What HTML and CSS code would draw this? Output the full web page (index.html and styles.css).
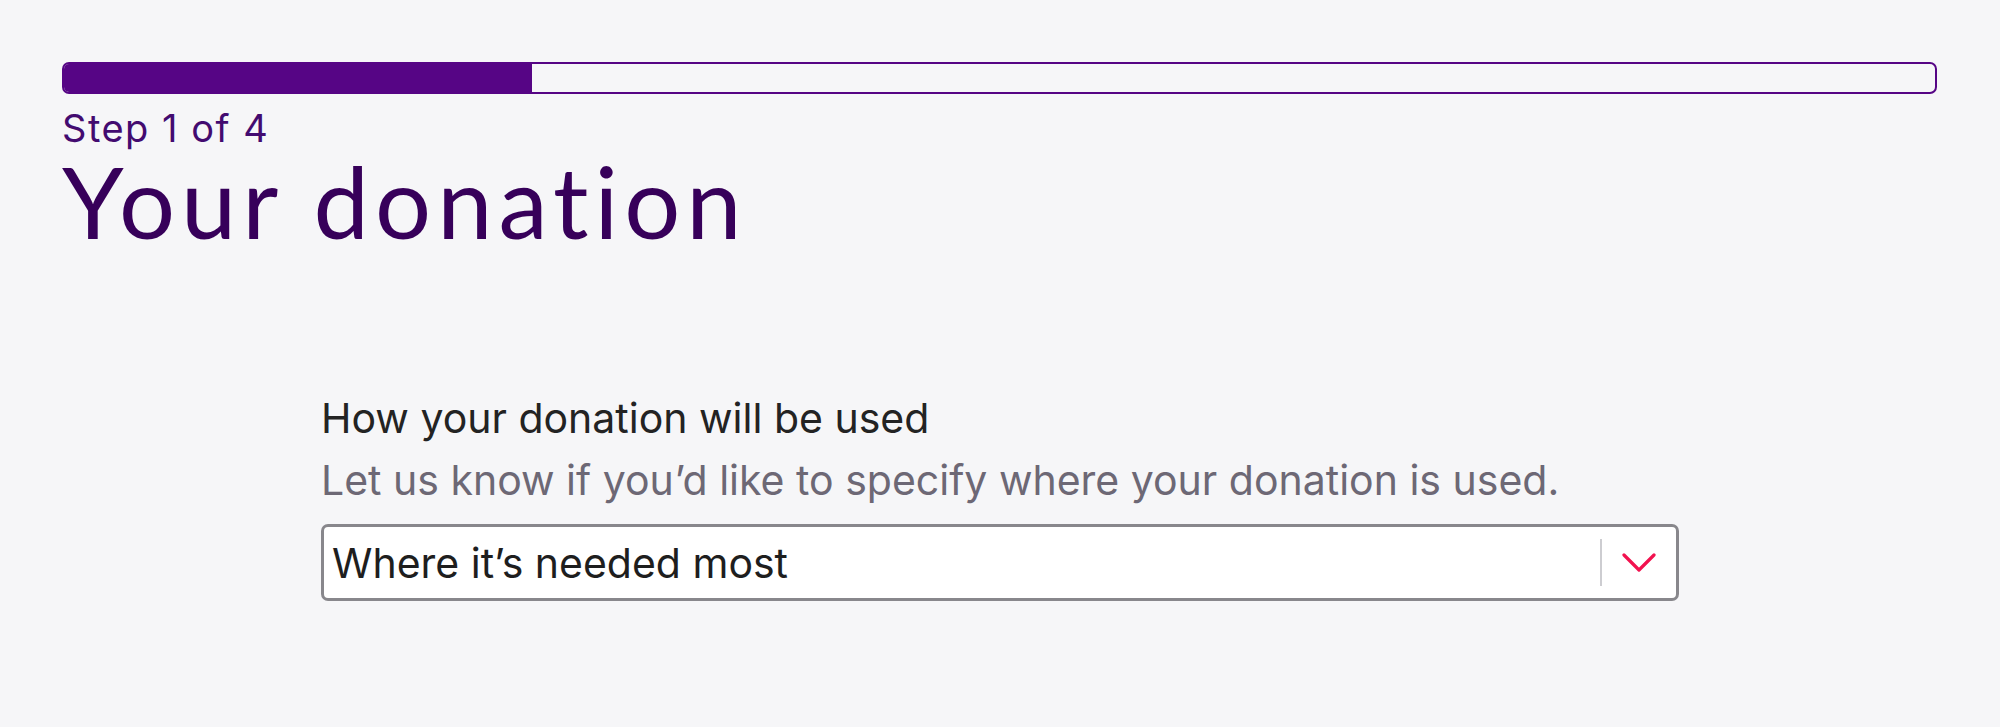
FILE: index.html
```html
<!DOCTYPE html>
<html lang="en">
<head>
<meta charset="utf-8">
<title>Your donation</title>
<link rel="stylesheet" href="styles.css">
</head>
<body>
<main class="page">
  <div class="progress" role="progressbar" aria-valuemin="0" aria-valuemax="4" aria-valuenow="1">
    <div class="progress-fill" style="width:25%"></div>
  </div>
  <p class="step">Step 1 of 4</p>
  <h1 class="title">Your donation</h1>
  <section class="field">
    <label class="field-label" for="use">How your donation will be used</label>
    <p class="field-hint">Let us know if you’d like to specify where your donation is used.</p>
    <div class="select" id="use" role="combobox" aria-expanded="false" tabindex="0">
      <span class="select-value">Where it’s needed most</span>
      <span class="select-sep"></span>
      <span class="select-icon">
        <svg width="34" height="20" viewBox="0 0 34 20" aria-hidden="true">
          <path d="M2 2 L17 17 L32 2" fill="none" stroke="#f2124f" stroke-width="3.2" stroke-linecap="round" stroke-linejoin="round"/>
        </svg>
      </span>
    </div>
  </section>
</main>
</body>
</html>
```
FILE: styles.css
```css
html, body {
  margin: 0;
  padding: 0;
  background: #f6f6f8;
}
body {
  font-family: Inter, "Noto Sans", "Liberation Sans", sans-serif;
}
.page {
  padding: 62px 63px 40px 62px;
}
.progress {
  height: 28px;
  border: 2px solid #560585;
  border-radius: 7px;
  background: #f6f6f8;
  overflow: hidden;
}
.progress-fill {
  height: 100%;
  background: #560585;
}
.step {
  margin: 12px 0 0 0;
  font-size: 38px;
  letter-spacing: 1.5px;
  line-height: 44px;
  color: #430b70;
}
.title {
  margin: 1px 0 0 0;
  font-family: Lato, "Noto Sans", sans-serif;
  font-weight: 400;
  font-size: 99px;
  letter-spacing: 6px;
  line-height: 99px;
  color: #37005a;
}
.field {
  margin: 141px 0 0 259px;
  width: 1358px;
}
.field-label {
  display: block;
  font-size: 41px;
  line-height: 54px;
  color: #232323;
}
.field-hint {
  margin: 8px 0 17px 0;
  font-size: 41px;
  line-height: 54px;
  color: #6d6875;
}
.select {
  box-sizing: border-box;
  height: 77px;
  border: 3px solid #88878c;
  border-radius: 7px;
  background: #ffffff;
  display: flex;
  align-items: center;
  padding-left: 8px;
}
.select-value {
  flex: 1;
  font-size: 41px;
  line-height: 44px;
  color: #1e1e1e;
}
.select-sep {
  width: 2px;
  height: 47px;
  background: #cdcdd1;
}
.select-icon {
  width: 74px;
  display: flex;
  justify-content: center;
  align-items: center;
}
.select-icon svg {
  display: block;
}
```
